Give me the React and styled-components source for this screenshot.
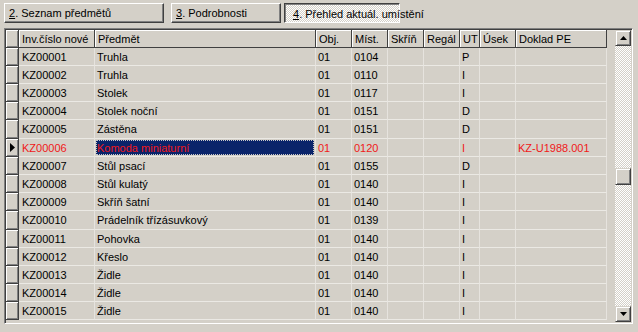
import styled, { createGlobalStyle } from "styled-components";

const GlobalStyle = createGlobalStyle`
  html, body {
    margin: 0;
    padding: 0;
    background: #d4d0c8;
  }
  body {
    font-family: "Liberation Sans", Arial, sans-serif;
    font-size: 11px;
    color: #000;
  }
`;

const COLS = [
  { key: "ind", title: "", w: 13 },
  { key: "inv", title: "Inv.číslo nové", w: 76 },
  { key: "name", title: "Předmět", w: 221 },
  { key: "obj", title: "Obj.", w: 36 },
  { key: "mist", title: "Míst.", w: 36 },
  { key: "skrin", title: "Skříň", w: 36 },
  { key: "regal", title: "Regál", w: 36 },
  { key: "ut", title: "UT", w: 20 },
  { key: "usek", title: "Úsek", w: 36 },
  { key: "doklad", title: "Doklad PE", w: 91 },
];

const ROWS = [
  ["KZ00001", "Truhla", "01", "0104", "P"],
  ["KZ00002", "Truhla", "01", "0110", "I"],
  ["KZ00003", "Stolek", "01", "0117", "I"],
  ["KZ00004", "Stolek noční", "01", "0151", "D"],
  ["KZ00005", "Zástěna", "01", "0151", "D"],
  ["KZ00006", "Komoda miniaturní", "01", "0120", "I", "KZ-U1988.001"],
  ["KZ00007", "Stůl psací", "01", "0155", "D"],
  ["KZ00008", "Stůl kulatý", "01", "0140", "I"],
  ["KZ00009", "Skříň šatní", "01", "0140", "I"],
  ["KZ00010", "Prádelník třízásuvkový", "01", "0139", "I"],
  ["KZ00011", "Pohovka", "01", "0140", "I"],
  ["KZ00012", "Křeslo", "01", "0140", "I"],
  ["KZ00013", "Židle", "01", "0140", "I"],
  ["KZ00014", "Židle", "01", "0140", "I"],
  ["KZ00015", "Židle", "01", "0140", "I"],
];

const SELECTED = 5;
const TEMPLATE = COLS.map((c) => c.w + "px").join(" ");

const Page = styled.div`
  padding: 3px 5px 0 4px;
  display: flex;
  flex-direction: column;
  gap: 5px;
`;

const TabBar = styled.div`
  display: flex;
  height: 20px;
`;

const Tab = styled.div`
  box-sizing: border-box;
  width: ${(p) => p.$w}px;
  margin-left: ${(p) => p.$ml}px;
  height: 20px;
  display: flex;
  align-items: center;
  padding-left: ${(p) => (p.$pressed ? 8 : 4)}px;
  padding-top: ${(p) => (p.$pressed ? 1 : 0)}px;
  background: ${(p) =>
    p.$pressed
      ? "conic-gradient(#ffffff 25%, #d4d0c8 0 50%, #ffffff 0 75%, #d4d0c8 0) 0 0 / 2px 2px"
      : "#d4d0c8"};
  border: 1px solid;
  border-color: ${(p) =>
    p.$pressed ? "#404040 #ffffff #ffffff #404040" : "#ffffff #404040 #404040 #ffffff"};
  box-shadow: ${(p) =>
    p.$pressed ? "inset 1px 1px #808080" : "inset -1px -1px #808080"};
  white-space: nowrap;
  u {
    text-decoration: underline;
    text-underline-offset: 1px;
  }
`;

const GridFrame = styled.div`
  box-sizing: border-box;
  height: 296px;
  display: flex;
  border: 1px solid;
  border-color: #808080 #ffffff #ffffff #808080;
  box-shadow: inset 1px 1px #404040;
  padding: 1px 1px 0 1px;
`;

const Table = styled.div`
  display: flex;
  flex-direction: column;
`;

const Row = styled.div`
  display: grid;
  grid-template-columns: ${TEMPLATE};
  height: ${(p) => (p.$tall ? 19 : 18)}px;
`;

const HeadCell = styled.div`
  box-sizing: border-box;
  border-right: 1px solid #404040;
  border-bottom: 1px solid #404040;
  box-shadow: inset 1px 1px #ffffff, inset -1px -1px #d4d0c8;
  padding-left: 3px;
  display: flex;
  align-items: center;
  white-space: nowrap;
  overflow: hidden;
`;

const IndCell = styled.div`
  box-sizing: border-box;
  border-right: 1px solid #404040;
  border-bottom: 1px solid #404040;
  box-shadow: inset 1px 1px #ffffff, inset -1px -1px #808080;
  display: flex;
  align-items: center;
  justify-content: center;
`;

const Cell = styled.div`
  box-sizing: border-box;
  border-right: 1px solid #e6e3de;
  border-bottom: 1px solid #ebe9e4;
  padding-left: ${(p) => (p.$first ? 3 : 2)}px;
  display: flex;
  align-items: center;
  white-space: nowrap;
  overflow: hidden;
  color: ${(p) => (p.$sel ? "#f01818" : "#000")};
`;

const FocusBox = styled.span`
  display: flex;
  align-items: center;
  flex: 1;
  align-self: stretch;
  margin: 1px 1px 1px -1px;
  padding-left: 1px;
  background: #0a246a;
  outline: 1px dotted #c8c8c8;
  outline-offset: -1px;
`;

const Filler = styled.div`
  width: 8px;
`;

const ScrollBar = styled.div`
  width: 16px;
  display: flex;
  flex-direction: column;
  padding-bottom: 1px;
`;

const ScrollButton = styled.div`
  box-sizing: border-box;
  width: 16px;
  height: ${(p) => p.$h || 16}px;
  background: #d4d0c8;
  border: 1px solid;
  border-color: #d4d0c8 #404040 #404040 #d4d0c8;
  box-shadow: inset 1px 1px #ffffff, inset -1px -1px #808080;
  display: flex;
  align-items: center;
  justify-content: center;
`;

const Track = styled.div`
  flex: 1;
  background: conic-gradient(#ffffff 25%, #d4d0c8 0 50%, #ffffff 0 75%, #d4d0c8 0) 0 0 / 2px 2px;
  display: flex;
  flex-direction: column;
  padding-top: 122px;
`;

function Arrow({ dir }) {
  return (
    <svg width="7" height="4" viewBox="0 0 7 4">
      {dir === "up" ? (
        <path d="M3.5 0 L7 4 L0 4 Z" fill="#000" />
      ) : (
        <path d="M0 0 L7 0 L3.5 4 Z" fill="#000" />
      )}
    </svg>
  );
}

function Pointer() {
  return (
    <svg width="5" height="9" viewBox="0 0 5 9">
      <path d="M0 0 L5 4.5 L0 9 Z" fill="#000" />
    </svg>
  );
}

export default function App() {
  return (
    <>
      <GlobalStyle />
      <Page>
        <TabBar>
          <Tab $w={160} $ml={0}>
            <u>2</u>. Seznam předmětů
          </Tab>
          <Tab $w={110} $ml={7}>
            <u>3</u>. Podrobnosti
          </Tab>
          <Tab $w={116} $ml={3} $pressed>
            <u>4</u>. Přehled aktuál. umístění
          </Tab>
        </TabBar>

        <GridFrame>
          <Table>
            <Row>
              {COLS.map((c) =>
                c.key === "ind" ? (
                  <IndCell key={c.key} />
                ) : (
                  <HeadCell key={c.key}>{c.title}</HeadCell>
                )
              )}
            </Row>
            {ROWS.map((r, i) => {
              const sel = i === SELECTED;
              const [inv, name, obj, mist, ut, doklad] = r;
              return (
                <Row key={inv} $tall={i % 5 === 4 && i < 14}>
                  <IndCell>{sel && <Pointer />}</IndCell>
                  <Cell $sel={sel} $first>{inv}</Cell>
                  <Cell $sel={sel}>
                    {sel ? <FocusBox>{name}</FocusBox> : name}
                  </Cell>
                  <Cell $sel={sel}>{obj}</Cell>
                  <Cell $sel={sel}>{mist}</Cell>
                  <Cell $sel={sel} />
                  <Cell $sel={sel} />
                  <Cell $sel={sel}>{ut}</Cell>
                  <Cell $sel={sel} />
                  <Cell $sel={sel}>{doklad || ""}</Cell>
                </Row>
              );
            })}
          </Table>
          <Filler />
          <ScrollBar>
            <ScrollButton>
              <Arrow dir="up" />
            </ScrollButton>
            <Track>
              <ScrollButton $h={17} />
            </Track>
            <ScrollButton>
              <Arrow dir="down" />
            </ScrollButton>
          </ScrollBar>
        </GridFrame>
      </Page>
    </>
  );
}
